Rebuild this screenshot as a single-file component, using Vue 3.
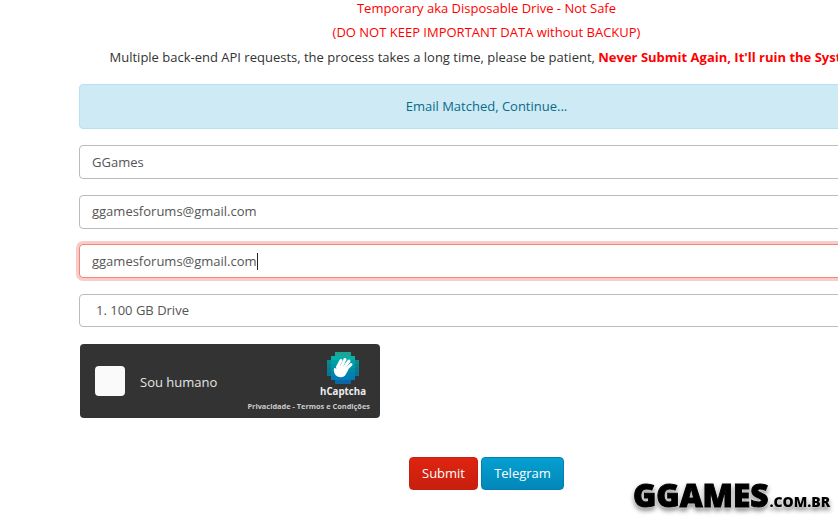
<script setup>
const rows = [
  { y: 0, from: 2, n: 4, c: '#16c0ac' },
  { y: 1, from: 1, n: 6, c: '#06b0aa' },
  { y: 2, from: 0, n: 8, c: '#00a0a6' },
  { y: 3, from: 0, n: 8, c: '#0096a4' },
  { y: 4, from: 0, n: 8, c: '#008ca6' },
  { y: 5, from: 0, n: 8, c: '#0084ae' },
  { y: 6, from: 1, n: 6, c: '#007cb8' },
  { y: 7, from: 2, n: 4, c: '#0074bf' }
]
const cells = []
for (const r of rows) {
  for (let i = 0; i < r.n; i++) {
    const x = r.from + i
    const edge = x === 0 || x === 7 || r.y === 0 || r.y === 7
    cells.push({ key: r.y + '-' + x, x: x * 4, y: r.y * 4, fill: r.c, op: edge ? 0.8 : 1 })
  }
}
</script>

<template>
  <div class="page">
    <main class="content">
      <p class="notice red first">Temporary aka Disposable Drive - Not Safe</p>
      <p class="notice red second">(DO NOT KEEP IMPORTANT DATA without BACKUP)</p>
      <p class="notice third">Multiple back-end API requests, the process takes a long time, please be patient, <b>Never Submit Again, It'll ruin the System.</b></p>
      <div class="alert"><span class="lift">Email Matched, Continue...</span></div>
      <div class="field">GGames</div>
      <div class="field"><span class="lift">ggamesforums@gmail.com</span></div>
      <div class="field focus">ggamesforums@gmail.com<span class="caret"></span></div>
      <div class="field select"><span class="lift">1. 100 GB Drive</span></div>
      <div class="captcha">
        <span class="box"></span>
        <span class="human">Sou humano</span>
        <div class="brand">
          <svg class="logo" width="32" height="32" viewBox="0 0 32 32">
            <rect v-for="c in cells" :key="c.key" :x="c.x" :y="c.y" width="4" height="4" :fill="c.fill" :opacity="c.op" />
            <g stroke="#fff" stroke-linecap="round" fill="none" stroke-width="3">
              <path d="M10.5 15 L14 8.5" />
              <path d="M14 15.5 L18 7.5" />
              <path d="M16.5 16.5 L22 9" />
              <path d="M18 18.5 L24 12.5" />
            </g>
            <path d="M7 16 C6.5 19.5 7.5 23 10.5 24.5 C13.5 26 17.5 25.5 19 22 L21.5 17.5 L13 13 L10 14 L9.5 16.5 Z" fill="#fff" />
          </svg>
          <span class="name">hCaptcha</span>
          <span class="links">Privacidade - Termos e Condições</span>
        </div>
      </div>
      <div class="actions">
        <button class="btn submit">Submit</button>
        <button class="btn telegram">Telegram</button>
      </div>
    </main>
    <div class="mark"><span class="big">GGAMES</span><span class="small">.COM.BR</span></div>
  </div>
</template>

<style>
html, body { margin: 0; background: #fff; overflow: hidden; }
</style>

<style scoped>
.page {
  position: relative;
  width: 838px;
  height: 517px;
  overflow: hidden;
  font-family: "Open Sans", sans-serif;
  font-size: 13px;
  color: #333;
}
.content {
  width: 815px;
  margin-left: 79px;
  display: flex;
  flex-direction: column;
  align-items: stretch;
}
.lift { margin-top: -2px; }
.notice {
  margin: 0;
  text-align: center;
  line-height: 18px;
  white-space: nowrap;
}
.red { color: #f00; }
.first { margin-top: -1px; }
.second { margin-top: 6px; }
.third { margin-top: 7px; padding-left: 2px; }
.third b { color: #f00; font-weight: 700; }
.alert {
  box-sizing: border-box;
  height: 45px;
  margin-top: 18px;
  border: 1px solid #b5e2f0;
  border-radius: 4px;
  background: #cdeaf5;
  color: #0a6a8a;
  display: flex;
  align-items: center;
  justify-content: center;
}
.field {
  box-sizing: border-box;
  height: 34px;
  margin-top: 16px;
  padding: 0 12px;
  border: 1px solid #bbb;
  border-radius: 4px;
  background: #fff;
  color: #555;
  display: flex;
  align-items: center;
}
.focus {
  margin-top: 15px;
  border-color: #f5837a;
  box-shadow: 0 0 0 3px #f8cdc9;
}
.select { padding-left: 16px; margin-top: 16px; height: 33px; }
.caret {
  width: 1px;
  height: 17px;
  background: #222;
}
.captcha {
  box-sizing: border-box;
  position: relative;
  width: 300px;
  height: 74px;
  margin: 17px 0 0 1px;
  border-radius: 4px;
  background: #333;
  color: #eee;
  display: flex;
  align-items: center;
}
.box {
  width: 30px;
  height: 30px;
  margin-left: 15px;
  border-radius: 4px;
  background: #fafafa;
}
.human {
  margin-left: 15px;
  margin-top: 1px;
  font-size: 13px;
  color: #e5e5e5;
}
.brand {
  margin-left: auto;
  margin-right: 10px;
  padding-top: 2px;
  display: flex;
  flex-direction: column;
  align-items: flex-end;
}
.logo { display: block; margin-right: 11px; }
.name {
  margin-top: 1px;
  margin-right: 4px;
  font-size: 9.7px;
  line-height: 14px;
  font-weight: 700;
  color: #eee;
}
.links {
  margin-top: 2px;
  font-size: 7.4px;
  line-height: 11px;
  font-weight: 700;
  color: #ccc;
  white-space: nowrap;
}
.actions {
  margin-top: 39px;
  display: flex;
  justify-content: center;
  gap: 3px;
}
.btn {
  box-sizing: border-box;
  height: 33px;
  padding: 0 12px 2px;
  border-radius: 4px;
  font-family: inherit;
  font-size: 13px;
  color: #fff;
}
.submit {
  width: 69px;
  border: 1px solid #c8200e;
  background: linear-gradient(#de2410, #c81f0e);
}
.telegram {
  width: 83px;
  border: 1px solid #0281b0;
  background: linear-gradient(#04a0d0, #0287b8);
}
.mark {
  position: absolute;
  left: 633px;
  top: 476px;
  display: flex;
  align-items: baseline;
  white-space: nowrap;
  font-family: "Open Sans", sans-serif;
  color: #000;
  filter: drop-shadow(0 0 1px #fff) drop-shadow(0 3px 2px rgba(0, 0, 0, 0.45));
}
.big {
  font-size: 31.5px;
  line-height: 38px;
  font-weight: 800;
  -webkit-text-stroke: 1px #000;
}
.small {
  font-size: 14px;
  font-weight: 800;
  margin-left: 1px;
}
</style>
